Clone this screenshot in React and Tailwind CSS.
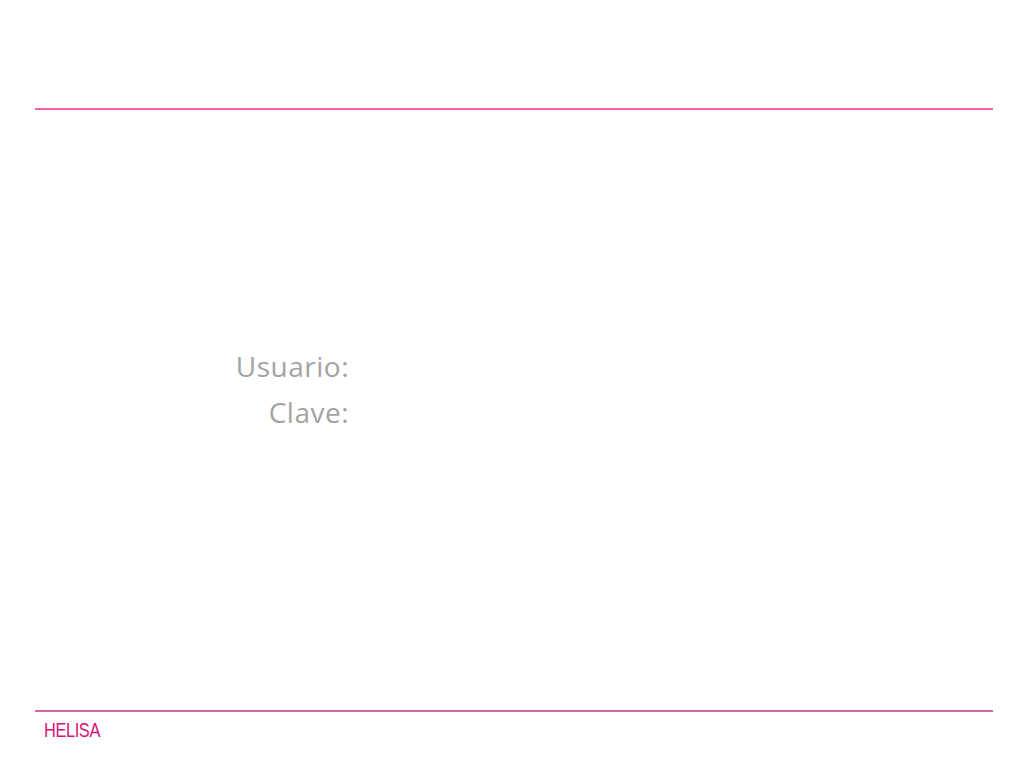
export default function App() {
  return (
    <div className="w-[1024px] h-[768px] bg-white flex flex-col pl-[35px] pr-[31px] overflow-hidden">
      <div className="h-[108px]" />
      <div className="h-[2px] bg-[#f063a6]" />
      <div className="flex-1 flex flex-col pt-[240px]">
        <div className="flex flex-col gap-[13px] w-[314px] items-end font-['Open_Sans',sans-serif] text-[28px] leading-[33px] tracking-[0.5px] text-[#a3a3a3] font-normal">
          <span>Usuario:</span>
          <span>Clave:</span>
        </div>
      </div>
      <div className="h-[2px] bg-[#d563a8]" />
      <div className="h-[56px] pt-[5px] pl-[9px]">
        <span className="inline-block origin-left scale-x-[0.78] font-['Liberation_Sans',sans-serif] text-[21px] leading-[26px] tracking-[-0.5px] text-[#d4137c]">HELISA</span>
      </div>
    </div>
  );
}
